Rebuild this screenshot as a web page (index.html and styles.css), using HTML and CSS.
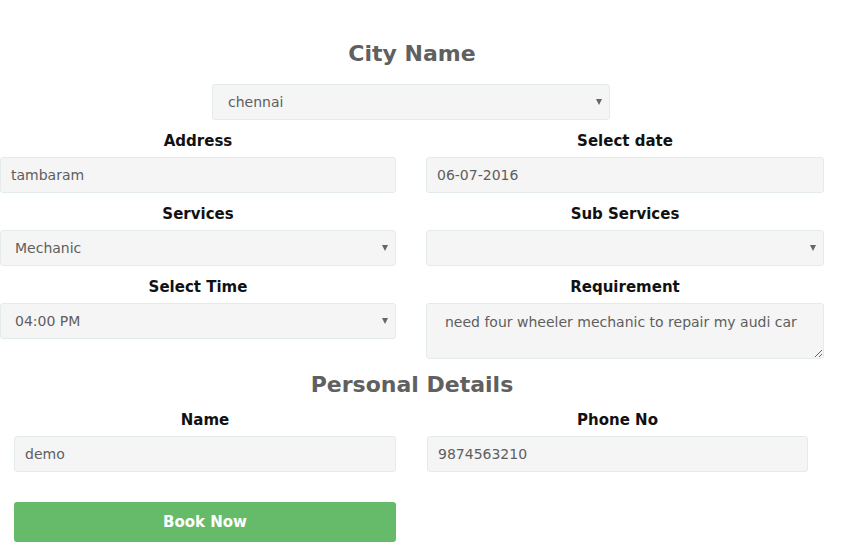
FILE: index.html
```html
<!DOCTYPE html>
<html lang="en">
<head>
<meta charset="utf-8">
<title>Booking form</title>
<link rel="stylesheet" href="styles.css">
</head>
<body>
<main class="form">
  <h2 class="title">City Name</h2>
  <div class="city">
    <div class="select-wrap"><select class="control select"><option>chennai</option></select></div>
  </div>

  <div class="grid">
    <div class="field">
      <label class="label">Address</label>
      <input class="control input" type="text" value="tambaram">
    </div>
    <div class="field">
      <label class="label">Select date</label>
      <input class="control input" type="text" value="06-07-2016">
    </div>
    <div class="field">
      <label class="label">Services</label>
      <div class="select-wrap"><select class="control select"><option>Mechanic</option></select></div>
    </div>
    <div class="field">
      <label class="label">Sub Services</label>
      <div class="select-wrap"><select class="control select"><option></option></select></div>
    </div>
    <div class="field">
      <label class="label">Select Time</label>
      <div class="select-wrap"><select class="control select"><option>04:00 PM</option></select></div>
    </div>
    <div class="field">
      <label class="label">Requirement</label>
      <textarea class="control textarea">need four wheeler mechanic to repair my audi car</textarea>
    </div>
  </div>

  <h2 class="title personal-title">Personal Details</h2>

  <div class="grid personal">
    <div class="field">
      <label class="label">Name</label>
      <input class="control input" type="text" value="demo">
    </div>
    <div class="field">
      <label class="label">Phone No</label>
      <input class="control input" type="text" value="9874563210">
    </div>
  </div>

  <button class="book" type="button">Book Now</button>
</main>
</body>
</html>
```

FILE: styles.css
```css
* { box-sizing: border-box; }

html, body {
  margin: 0;
  background: #ffffff;
}

body {
  font-family: "DejaVu Sans", "Liberation Sans", sans-serif;
  overflow: hidden;
}

.form {
  width: 824px;
  padding-top: 39px;
}

.title {
  margin: 0;
  text-align: center;
  font-size: 22px;
  line-height: 30px;
  font-weight: bold;
  color: #606060;
}

.city {
  display: flex;
  justify-content: center;
  margin-top: 15px;
  margin-bottom: 11px;
  padding-right: 2px;
}

.city .select-wrap {
  width: 398px;
}

.grid {
  display: grid;
  grid-template-columns: 396px 398px;
  column-gap: 30px;
  row-gap: 11px;
}

.field {
  display: flex;
  flex-direction: column;
}

.label {
  display: block;
  text-align: center;
  font-size: 15px;
  line-height: 20px;
  font-weight: bold;
  color: #111;
  margin-bottom: 6px;
}

.control {
  display: block;
  width: 100%;
  height: 36px;
  margin: 0;
  background: #f5f5f5;
  border: 1px solid #e3ecea;
  border-radius: 3px;
  font-family: "DejaVu Sans", "Liberation Sans", sans-serif;
  font-size: 14px;
  color: #5e5e5e;
  outline: none;
}

.input {
  padding: 0 10px;
}

.select-wrap {
  position: relative;
}

.select {
  appearance: none;
  -webkit-appearance: none;
  padding: 0 24px 0 14px;
}

.select-wrap::after {
  content: "";
  position: absolute;
  right: 8px;
  top: 15px;
  width: 0;
  height: 0;
  border-left: 3px solid transparent;
  border-right: 3px solid transparent;
  border-top: 6px solid #666;
  pointer-events: none;
}

.city .select {
  padding-left: 15px;
}

.textarea {
  height: 56px;
  padding: 8px 18px;
  line-height: 20px;
  resize: vertical;
}

.personal-title {
  margin-top: 11px;
  margin-bottom: 10px;
}

.personal {
  margin-left: 14px;
  grid-template-columns: 382px 381px;
  column-gap: 31px;
}

.book {
  display: block;
  margin: 30px 0 0 14px;
  width: 382px;
  height: 40px;
  border: none;
  border-radius: 3px;
  background: #65bb6a;
  color: #ffffff;
  font-family: "DejaVu Sans", "Liberation Sans", sans-serif;
  font-size: 15px;
  font-weight: bold;
}
```
